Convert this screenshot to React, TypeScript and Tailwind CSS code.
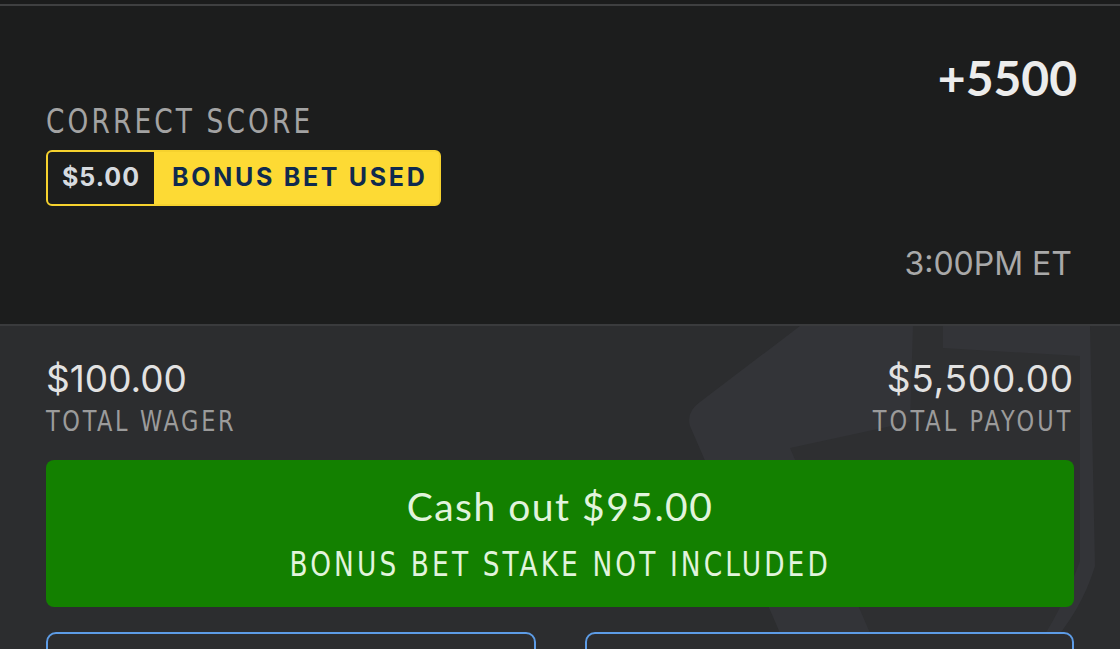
const cond = "font-['DejaVu_Sans_Condensed','DejaVu_Sans',sans-serif] scale-x-[0.89]";

function ShieldMark() {
  // faint shield watermark behind the totals
  return (
    <svg
      className="pointer-events-none absolute left-[640px] top-0"
      width="480"
      height="330"
      viewBox="0 0 480 330"
    >
      <path
        d="M160 0 L450 0 L455 240 Q440 290 400 330 L150 330 L50 100 Q46 86 60 76 Z"
        fill="#333438"
      />
      <path
        d="M273 0 L303 0 L303 22 L440 30 L440 235 Q420 290 390 330 L240 330 L150 122 L270 96 Z"
        fill="#2e2f31"
      />
    </svg>
  );
}

export default function App() {
  return (
    <div className="h-[649px] w-[1120px] overflow-hidden bg-[#1c1d1d] font-['Lato',sans-serif]">
      <div className="h-1 bg-[#1b1c1c]" />
      <div className="h-[2px] bg-[#3f4041]" />

      <div className="flex h-[318px] flex-col px-[46px] pt-[48px]">
        <div className="-mr-[3px] flex justify-end">
          <span className="text-[48px] font-bold leading-none text-[#ececec]">+5500</span>
        </div>
        <div
          className={`${cond} mt-[3px] origin-left text-[33px] leading-none tracking-[3.5px] text-[#a3a3a3]`}
        >
          CORRECT SCORE
        </div>
        <div className="mt-[12px] flex h-[56px] w-[395px] overflow-hidden rounded-[6px] border-2 border-[#f6d22e] bg-[#fdda34] font-['Inter',sans-serif]">
          <div className="flex w-[106px] items-center justify-center bg-[#1c1d1d]">
            <span className="text-[25px] font-bold tracking-[1px] text-[#d6dadf]">$5.00</span>
          </div>
          <div className="flex flex-1 items-center pl-[18px]">
            <span className="text-[25px] font-bold tracking-[2.7px] text-[#0f2a4e]">BONUS BET USED</span>
          </div>
        </div>
        <div className="mt-auto mb-[44px] flex justify-end">
          <span className="pr-[2px] font-['Inter',sans-serif] text-[32px] leading-none text-[#a9a9a9]">
            3:00PM ET
          </span>
        </div>
      </div>

      <div className="h-[2px] bg-[#3a3b3d]" />

      <div className="relative h-[323px] bg-[#2c2d2f] px-[46px] pt-[34px]">
        <ShieldMark />
        <div className="relative flex justify-between">
          <div className="flex flex-col items-start">
            <span className="font-['Inter',sans-serif] text-[37px] leading-none text-[#e2e2e2]">$100.00</span>
            <span className={`${cond} mt-[11px] origin-left text-[28px] leading-none tracking-[3px] text-[#9b9b9b]`}>
              TOTAL WAGER
            </span>
          </div>
          <div className="flex flex-col items-end">
            <span className="font-['Inter',sans-serif] text-[37px] leading-none tracking-[0.8px] text-[#e2e2e2]">
              $5,500.00
            </span>
            <span className={`${cond} mt-[11px] origin-right text-[28px] leading-none tracking-[3.5px] text-[#9b9b9b]`}>
              TOTAL PAYOUT
            </span>
          </div>
        </div>

        <div className="relative mt-[24px] flex h-[147px] flex-col items-center justify-center rounded-[8px] bg-[#138000]">
          <span className="text-[39px] leading-none tracking-[1.5px] text-[#e1f4dc]">Cash out $95.00</span>
          <span className={`${cond} mt-[22px] text-[33px] leading-none tracking-[3.5px] text-[#e1f4dc]`}>
            BONUS BET STAKE NOT INCLUDED
          </span>
        </div>

        <div className="relative mt-[25px] grid grid-cols-2 gap-[49px]">
          <div className="h-[70px] rounded-[10px] border-2 border-[#5d9ce6] bg-[#2c2d2f]" />
          <div className="h-[70px] rounded-[10px] border-2 border-[#5d9ce6] bg-[#2c2d2f]" />
        </div>
      </div>
    </div>
  );
}
